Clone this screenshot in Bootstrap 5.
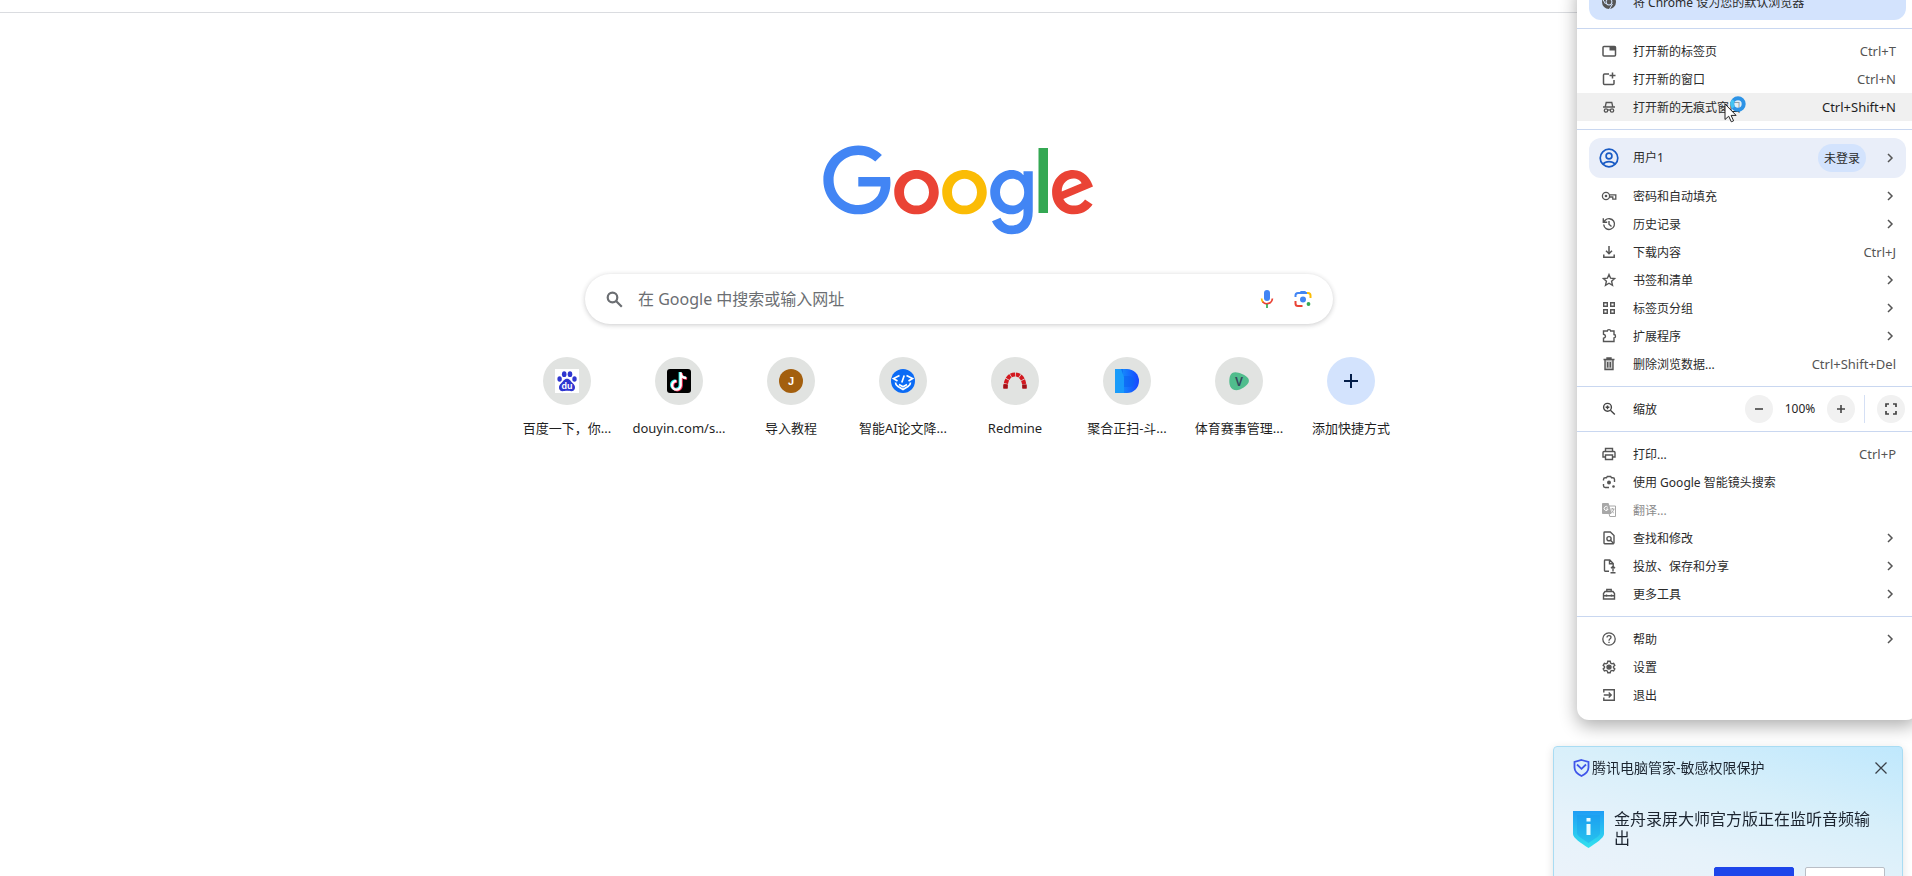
<!DOCTYPE html>
<html lang="zh-CN">
<head>
<meta charset="utf-8">
<meta name="viewport" content="width=device-width, initial-scale=1">
<title>新标签页</title>
<link href="https://cdn.jsdelivr.net/npm/bootstrap@5.3.0/dist/css/bootstrap.min.css" rel="stylesheet">
<style>
body{font-family:"Noto Sans","Noto Sans CJK SC",sans-serif;color:#1f1f1f;background:#fff;overflow:hidden}
/* the maximised window runs slightly past the right screen edge */
.shell{min-height:100vh;margin-right:-6px}
.toolbar-edge{height:13px;border-bottom:1px solid #dadce0}
.start-page{padding-top:132px}
.brand-logo{width:272px;height:92px}
.search-box{width:748px;max-width:90%;height:50px;border-radius:25px;box-shadow:0 1px 5px rgba(32,33,36,.24);padding:0 20px 0 21px;margin-top:37px}
.search-box input{font-size:16px;color:#444;margin-left:15px;outline:0}
.search-box input::placeholder{color:#6b6e72;opacity:1}
.search-box button,.tile,.menu-row,.round-btn,.close-btn{background:none;border:0;padding:0}
.tiles{margin-top:33px}
.tile{width:112px;color:#1f1f1f;font-size:13px;line-height:18px;text-decoration:none}
.tile-disc{width:48px;height:48px;border-radius:50%;background:#e1e3e1;margin-bottom:14px}
.tile-disc.add{background:#d3e3fd}
.app-menu{top:-20px;right:0;width:341px;border-radius:12px;background:#fff;box-shadow:0 6px 18px rgba(0,0,0,.32);padding-bottom:11px;font-size:12px;line-height:16px}
.app-menu hr{margin:8px 0;border-color:#c9d7f0;opacity:1}
.menu-row{width:100%;height:28px;padding:0 22px 0 24px;gap:16px;color:#2b2b2b;text-align:left}
.menu-row>span,.zoom-row>span{padding-top:1px}
.menu-row:disabled{color:#8b8b8b}
.menu-row.hovered{background:#f0f0f0}
.menu-row svg,.menu-soft svg{flex:none;color:#555}
.menu-row:disabled svg{color:#a8a8a8}
.menu-row .keys{color:#555;font-size:13px;padding-top:0}
.menu-row.hovered .keys{color:#1f1f1f}
.menu-soft{border:0;margin:0 12px;width:317px;height:40px;border-radius:12px;padding:0 10px;gap:14px;background:#e9eef9;font-size:12px;color:#2b2b2b;text-align:left}
.menu-soft.promo{background:#d3e3fd;padding-left:12px;gap:16px}
.menu-soft.promo span{padding-top:6px}
.menu-soft.promo svg{margin-top:4px}
.menu-soft.profile{margin-bottom:4px}
.menu-soft.profile .face{color:#1a5bc4}
.status-pill{background:#d3e3fd;border-radius:14px;height:28px;line-height:29px;width:48px;text-align:center;margin-right:4px}
.zoom-row{height:28px;padding:0 13px 0 24px;gap:16px}
.zoom-row svg{color:#444}
.round-btn{width:28px;height:28px;border-radius:50%;background:#f1f1f1}
.zoom-value{width:54px;text-align:center}
.zoom-split{width:1px;height:28px;background:#d5e0f5;margin:0 12px 0 9px}
.pointer{left:147px;top:2px}
.guard{top:calc(100% - 130px);right:9px;width:350px;padding:12px 15px 24px 19px;border:1px solid #a9dcf3;border-radius:4px;background:linear-gradient(195deg,#bfe8fd 0%,#d7effa 32%,#e6f2fa 60%,#eef3fa 100%);box-shadow:0 2px 10px rgba(0,0,0,.12);color:#1c2530}
.guard-title{font-size:14px;line-height:18px;gap:2px}
.guard-text{font-size:16px;line-height:19px;margin:0;font-weight:400}
.guard-body{margin-top:33px;gap:10px;padding-right:14px}
.guard-actions{margin:19px 2px 0 0;gap:11px}
.guard-actions button{width:80px;height:30px;border-radius:2px;border:1px solid #b9bec6;background:#fff}
.guard-actions button.primary{background:#1d45ea;border-color:#1d45ea}
</style>
</head>
<body>
<svg width="0" height="0" class="position-absolute" aria-hidden="true">
  <symbol id="chev" viewBox="0 0 12 12"><path d="M4 2l4 4-4 4" fill="none" stroke="currentColor" stroke-width="1.500"/></symbol>
</svg>
<div class="shell position-relative">
  <div class="toolbar-edge"></div>
  <main class="start-page d-flex flex-column align-items-center">
    <svg class="brand-logo" viewBox="0 0 272 92" role="img" aria-label="Google">
      <path fill="#EA4335" d="M115.75 47.18c0 12.77-9.99 22.18-22.25 22.18s-22.25-9.41-22.25-22.18C71.25 34.32 81.24 25 93.5 25s22.25 9.32 22.25 22.18zm-9.74 0c0-7.98-5.79-13.44-12.51-13.44S80.99 39.2 80.99 47.18c0 7.9 5.79 13.44 12.51 13.44s12.51-5.55 12.51-13.44z"/>
      <path fill="#FBBC05" d="M163.75 47.18c0 12.77-9.99 22.18-22.25 22.18s-22.25-9.41-22.25-22.18c0-12.85 9.99-22.18 22.25-22.18s22.25 9.32 22.25 22.18zm-9.74 0c0-7.98-5.79-13.44-12.51-13.44s-12.51 5.46-12.51 13.44c0 7.9 5.79 13.44 12.51 13.44s12.51-5.55 12.51-13.44z"/>
      <path fill="#4285F4" d="M209.75 26.34v39.82c0 16.38-9.66 23.07-21.08 23.07-10.75 0-17.22-7.19-19.66-13.07l8.48-3.53c1.51 3.61 5.21 7.87 11.17 7.87 7.31 0 11.84-4.51 11.84-13v-3.19h-.34c-2.18 2.69-6.38 5.04-11.68 5.04-11.09 0-21.25-9.66-21.25-22.09 0-12.52 10.16-22.26 21.25-22.26 5.29 0 9.49 2.35 11.68 4.96h.34v-3.61h9.25zm-8.56 20.92c0-7.81-5.21-13.52-11.84-13.52-6.72 0-12.35 5.71-12.35 13.52 0 7.73 5.63 13.36 12.35 13.36 6.63 0 11.84-5.63 11.84-13.36z"/>
      <path fill="#34A853" d="M225 3v65h-9.5V3h9.5z"/>
      <path fill="#EA4335" d="M262.02 54.48l7.56 5.04c-2.44 3.61-8.32 9.83-18.48 9.83-12.6 0-22.01-9.74-22.01-22.18 0-13.19 9.49-22.18 20.92-22.18 11.51 0 17.14 9.16 18.98 14.11l1.01 2.52-29.65 12.28c2.27 4.45 5.8 6.72 10.75 6.72 4.96 0 8.4-2.44 10.92-6.14zm-23.27-7.98l19.82-8.23c-1.09-2.77-4.37-4.7-8.23-4.7-4.95 0-11.84 4.37-11.59 12.93z"/>
      <path fill="#4285F4" d="M35.29 41.41V32H67c.31 1.64.47 3.58.47 5.68 0 7.06-1.93 15.79-8.15 22.01-6.05 6.3-13.78 9.66-24.02 9.66C16.32 69.35.36 53.89.36 34.91.36 15.93 16.32.47 35.3.47c10.5 0 17.98 4.12 23.6 9.49l-6.64 6.64c-4.03-3.78-9.49-6.72-16.97-6.72-13.86 0-24.7 11.17-24.7 25.03 0 13.86 10.84 25.03 24.7 25.03 8.99 0 14.11-3.61 17.39-6.89 2.66-2.66 4.41-6.46 5.1-11.65l-22.49.01z"/>
    </svg>

    <form class="search-box d-flex align-items-center bg-white" role="search" onsubmit="return false">
      <svg width="17" height="17" viewBox="0 0 17 17" fill="none" stroke="#6b6e72" stroke-width="2.200"><circle cx="6.500" cy="6.500" r="4.800"/><path d="M10 10l5.800 5.800"/></svg>
      <input type="text" class="flex-grow-1 border-0 bg-transparent p-0" aria-label="搜索" placeholder="在 Google 中搜索或输入网址">
      <button type="button" class="d-flex me-3" aria-label="语音搜索">
        <svg width="20" height="20" viewBox="0 0 20 20" fill="none"><rect x="7" y="1" width="6" height="11" rx="3" fill="#4285f4"/><path d="M4.600 9.500c0 1.500.6 2.900 1.600 3.800" stroke="#fbbc04" stroke-width="1.700"/><path d="M5.600 12.800a5.600 5.600 0 0 0 9.800-3.300" stroke="#ea4335" stroke-width="1.700"/><path d="M10 15v4" stroke="#34a853" stroke-width="1.700"/></svg>
      </button>
      <button type="button" class="d-flex" aria-label="图片搜索">
        <svg width="20" height="20" viewBox="0 0 20 20" fill="none" stroke-width="2"><path d="M2.500 8V6.500a2.500 2.500 0 0 1 2.500-2.500h10" stroke="#4285f4"/><path d="M7 4V3.200Q7 2 8.200 2h3.600Q13 2 13 3.200V4z" fill="#4285f4"/><path d="M14 4h1a2.500 2.500 0 0 1 2.500 2.500V9" stroke="#fbbc04"/><path d="M2.500 12v2.500a2.500 2.500 0 0 0 2.500 2.500h4.500" stroke="#ea4335"/><circle cx="10" cy="10.500" r="3" fill="#4285f4"/><circle cx="15.500" cy="15" r="1.900" fill="#34a853"/></svg>
      </button>
    </form>

    <nav class="tiles d-flex" aria-label="快捷方式">
      <a href="#" class="tile d-flex flex-column align-items-center"><span class="tile-disc d-flex align-items-center justify-content-center">
        <svg width="24" height="24" viewBox="0 0 24 24"><rect width="24" height="24" fill="#fff"/><g fill="#2f36d0"><ellipse cx="4.600" cy="10" rx="2.200" ry="2.700"/><ellipse cx="9.200" cy="5.200" rx="2.300" ry="2.900"/><ellipse cx="15" cy="5.200" rx="2.300" ry="2.900"/><ellipse cx="19.500" cy="10" rx="2.200" ry="2.700"/><path d="M12 9.800c3 0 3.600 2.600 5.800 4.400 3.700 3 2.400 8-1.400 8-1.700 0-2.600-.4-4.400-.4s-2.700.4-4.400.4c-3.800 0-5.100-5-1.400-8C8.400 12.400 9 9.800 12 9.800z"/></g><text x="12" y="20" text-anchor="middle" font-family="Liberation Sans" font-weight="700" font-size="9" fill="#fff">du</text></svg>
      </span><span>百度一下，你...</span></a>
      <a href="#" class="tile d-flex flex-column align-items-center"><span class="tile-disc d-flex align-items-center justify-content-center">
        <svg width="24" height="24" viewBox="0 0 24 24" fill="none" stroke-width="2.600"><rect width="24" height="24" rx="3" fill="#000"/><path d="M12.900 3v12.800a4.300 4.300 0 1 1-4.300-4.300M13 4.200c.6 2.900 2.700 4.200 5.600 4.300" stroke="#25f4ee"/><path d="M14.500 4v12.800a4.300 4.300 0 1 1-4.300-4.300M14.500 5.200c.6 2.900 2.700 4.200 5.600 4.300" stroke="#fe2c55"/><path d="M13.700 3.300v13a4.300 4.300 0 1 1-4.300-4.300M13.700 4.700c.6 2.900 2.700 4.200 5.600 4.300" stroke="#fff" stroke-width="2.300"/></svg>
      </span><span>douyin.com/s...</span></a>
      <a href="#" class="tile d-flex flex-column align-items-center"><span class="tile-disc d-flex align-items-center justify-content-center">
        <svg width="24" height="24" viewBox="0 0 24 24"><circle cx="12" cy="12" r="12" fill="#a35f0e"/><text x="12" y="16" text-anchor="middle" font-family="Liberation Sans" font-weight="700" font-size="11" fill="#fff">J</text></svg>
      </span><span>导入教程</span></a>
      <a href="#" class="tile d-flex flex-column align-items-center"><span class="tile-disc d-flex align-items-center justify-content-center">
        <svg width="24" height="24" viewBox="0 0 24 24" fill="none" stroke="#fff" stroke-width="1.700"><circle cx="12" cy="12" r="12" fill="#0b6bf5" stroke="none"/><path d="M8.500 6.500L2.500 9.500l4 2.500M15.500 6.500l6 3-4 2.500M13.200 6.500l-2.400 7M4.500 13.500c0 2 .8 3 2.500 4l5 3 5-3c1.700-1 2.500-2 2.500-4M8 15.500l4 2.200 4-2.200"/></svg>
      </span><span>智能AI论文降...</span></a>
      <a href="#" class="tile d-flex flex-column align-items-center"><span class="tile-disc d-flex align-items-center justify-content-center">
        <svg width="24" height="24" viewBox="0 0 24 24" fill="none" stroke-width="4.200"><path d="M2.500 19.500C2.500 10 6.500 5.500 12 5.500s9.500 4.500 9.500 14" stroke="#d3181f" stroke-dasharray="4.200 .7"/><path d="M2.500 19.500v-4M21.500 19.500v-4" stroke="#a01218"/></svg>
      </span><span>Redmine</span></a>
      <a href="#" class="tile d-flex flex-column align-items-center"><span class="tile-disc d-flex align-items-center justify-content-center">
        <svg width="24" height="24" viewBox="0 0 24 24"><defs><linearGradient id="dg"><stop offset="0" stop-color="#14a5fb"/><stop offset="1" stop-color="#1746ff"/></linearGradient></defs><path d="M0 0h12a12 12 0 0 1 0 24H0z" fill="url(#dg)"/><path d="M8 7h6a5.500 5.500 0 0 1 0 11H9v6H0V0h8z" fill="#0b62f0" opacity=".55"/><path d="M0 0h6l3 8v16H0z" fill="#1ba4fb" opacity=".8"/></svg>
      </span><span>聚合正扫-斗...</span></a>
      <a href="#" class="tile d-flex flex-column align-items-center"><span class="tile-disc d-flex align-items-center justify-content-center">
        <svg width="24" height="24" viewBox="0 0 24 24"><path d="M3 7C5 2 10 3 15 5c5 2 8 5 6.500 8.500C20 17 13 22 7.500 21 2 20 1.500 12 3 7z" fill="#50bd8d"/><text x="12" y="17" text-anchor="middle" font-family="Liberation Sans" font-weight="700" font-size="12" fill="#34495e">V</text></svg>
      </span><span>体育赛事管理...</span></a>
      <button type="button" class="tile d-flex flex-column align-items-center"><span class="tile-disc add d-flex align-items-center justify-content-center">
        <svg width="16" height="16" viewBox="0 0 16 16" stroke="#041e49" stroke-width="2"><path d="M8 1v14M1 8h14"/></svg>
      </span><span>添加快捷方式</span></button>
    </nav>
  </main>

  <aside class="app-menu position-absolute" role="menu">
    <button type="button" class="menu-soft promo d-flex align-items-center">
      <svg width="16" height="16" viewBox="0 0 16 16" fill="none" stroke="currentColor"><circle cx="8" cy="8" r="5.200" stroke-width="3.600"/><circle cx="8" cy="8" r="2.400" fill="currentColor" stroke="none"/><path d="M8 4h6.500M4.500 10L1.500 4.800M11.500 10l-3.300 5.500" stroke="#d3e3fd"/></svg>
      <span>将 Chrome 设为您的默认浏览器</span>
    </button>
    <hr>
    <button type="button" class="menu-row d-flex align-items-center">
      <svg width="16" height="16" viewBox="0 0 16 16" fill="none" stroke="currentColor" stroke-width="1.500"><rect x="2" y="3.500" width="12.500" height="9.500" rx="1"/><path d="M8.500 3.500h6v4h-6z" fill="currentColor" stroke="none"/></svg>
      <span class="flex-grow-1">打开新的标签页</span><span class="keys">Ctrl+T</span></button>
    <button type="button" class="menu-row d-flex align-items-center">
      <svg width="16" height="16" viewBox="0 0 16 16" fill="none" stroke="currentColor" stroke-width="1.500"><path d="M8 3H3.500Q2.500 3 2.500 4v8.500q0 1 1 1H12q1 0 1-1V9M11.500 1.500v6M8.500 4.500h6"/></svg>
      <span class="flex-grow-1">打开新的窗口</span><span class="keys">Ctrl+N</span></button>
    <button type="button" class="menu-row hovered d-flex align-items-center position-relative">
      <svg width="16" height="16" viewBox="0 0 16 16" fill="none" stroke="currentColor" stroke-width="1.300"><path d="M2 8h12M4.200 8l1-4.500h5.600l1 4.500"/><circle cx="5" cy="11.500" r="1.700"/><circle cx="11" cy="11.500" r="1.700"/><path d="M6.700 11.200q1.300-.6 2.600 0"/></svg>
      <span class="flex-grow-1">打开新的无痕式窗口</span><span class="keys">Ctrl+Shift+N</span>
      <svg class="pointer position-absolute" width="24" height="28" viewBox="0 0 24 28" aria-hidden="true"><circle cx="14" cy="9" r="5.700" fill="#d9effc" fill-opacity=".6" stroke="#2d93e6" stroke-width="4"/><path d="M9.500 5.300A5.700 5.700 0 0 0 9.500 12.500" stroke="#45c4f2" stroke-width="3.500" fill="none"/><path d="M1 9v15.500l3.700-3.300 2.600 5.600 2.300-1-2.500-5.400h5z" fill="#fff" stroke="#222"/></svg>
    </button>
    <hr>
    <button type="button" class="menu-soft profile d-flex align-items-center">
      <svg class="face" width="20" height="20" viewBox="0 0 20 20" fill="none" stroke="currentColor" stroke-width="1.700"><circle cx="10" cy="10" r="8.800"/><circle cx="10" cy="8" r="2.900"/><path d="M4 16.200c2.800-3.400 9.200-3.400 12 0"/></svg>
      <span class="flex-grow-1">用户1</span><span class="status-pill">未登录</span><svg width="12" height="12"><use href="#chev"/></svg>
    </button>
    <button type="button" class="menu-row d-flex align-items-center">
      <svg width="16" height="16" viewBox="0 0 16 16" fill="none" stroke="currentColor" stroke-width="1.300"><circle cx="5" cy="8" r="3.600"/><circle cx="5" cy="8" r="1.300" fill="currentColor" stroke="none"/><path d="M8.500 6.800h6.300v4.400h-3V9H8.500"/></svg>
      <span class="flex-grow-1">密码和自动填充</span><svg width="12" height="12"><use href="#chev"/></svg></button>
    <button type="button" class="menu-row d-flex align-items-center">
      <svg width="16" height="16" viewBox="0 0 16 16" fill="none" stroke="currentColor" stroke-width="1.400"><path d="M2.700 8.500a5.400 5.400 0 1 0 1.500-4.200L2.500 6M2.300 2.300V6.200h3.900M8 5v3.300l2.500 2.200"/></svg>
      <span class="flex-grow-1">历史记录</span><svg width="12" height="12"><use href="#chev"/></svg></button>
    <button type="button" class="menu-row d-flex align-items-center">
      <svg width="16" height="16" viewBox="0 0 16 16" fill="none" stroke="currentColor" stroke-width="1.500"><path d="M8 2v7.500M5 6.800l3 3 3-3M2.800 10.500v2.700h10.400v-2.700"/></svg>
      <span class="flex-grow-1">下载内容</span><span class="keys">Ctrl+J</span></button>
    <button type="button" class="menu-row d-flex align-items-center">
      <svg width="16" height="16" viewBox="0 0 16 16" fill="none" stroke="currentColor" stroke-width="1.400"><path d="M8 2.500l1.600 3.700 4 .4-3 2.700.9 4L8 11.200l-3.500 2.100.9-4-3-2.700 4-.4z"/></svg>
      <span class="flex-grow-1">书签和清单</span><svg width="12" height="12"><use href="#chev"/></svg></button>
    <button type="button" class="menu-row d-flex align-items-center">
      <svg width="16" height="16" viewBox="0 0 16 16" fill="none" stroke="currentColor" stroke-width="1.400"><path d="M2.700 2.700h3.600v3.600H2.700zM9.700 2.700h3.600v3.600H9.700zM2.700 9.700h3.600v3.600H2.700zM9.700 9.700h3.600v3.600H9.700z"/></svg>
      <span class="flex-grow-1">标签页分组</span><svg width="12" height="12"><use href="#chev"/></svg></button>
    <button type="button" class="menu-row d-flex align-items-center">
      <svg width="16" height="16" viewBox="0 0 16 16" fill="none" stroke="currentColor" stroke-width="1.400"><path d="M2.500 3h3.800a1.700 1.400 0 0 1 3.400 0H13v3.500a1.500 1.700 0 0 1 0 3.400v3.600H2.500v-3.300q2-.4 2-2t-2-2z"/></svg>
      <span class="flex-grow-1">扩展程序</span><svg width="12" height="12"><use href="#chev"/></svg></button>
    <button type="button" class="menu-row d-flex align-items-center">
      <svg width="16" height="16" viewBox="0 0 16 16" fill="none" stroke="currentColor" stroke-width="1.400"><path d="M4 3.500v10h8v-10" fill="#ccc"/><path d="M2.500 3.500h11M6 3V2h4v1M6.700 6v5.500M9.300 6v5.500"/></svg>
      <span class="flex-grow-1">删除浏览数据...</span><span class="keys">Ctrl+Shift+Del</span></button>
    <hr>
    <div class="zoom-row d-flex align-items-center">
      <svg width="16" height="16" viewBox="0 0 16 16" fill="none" stroke="currentColor" stroke-width="1.400"><circle cx="6.500" cy="6.300" r="3.900"/><path d="M9.400 9.200l4.400 4.400M4.600 6.300h3.800M6.500 4.400v3.800"/></svg>
      <span class="flex-grow-1">缩放</span>
      <div class="d-flex align-items-center">
        <button type="button" class="round-btn d-flex align-items-center justify-content-center" aria-label="缩小"><svg width="10" height="10" viewBox="0 0 10 10" stroke="currentColor" stroke-width="1.600"><path d="M1 5h8"/></svg></button>
        <span class="zoom-value">100%</span>
        <button type="button" class="round-btn d-flex align-items-center justify-content-center" aria-label="放大"><svg width="10" height="10" viewBox="0 0 10 10" stroke="currentColor" stroke-width="1.600"><path d="M1 5h8M5 1v8"/></svg></button>
        <span class="zoom-split"></span>
        <button type="button" class="round-btn d-flex align-items-center justify-content-center" aria-label="全屏"><svg width="14" height="14" viewBox="0 0 14 14" fill="none" stroke="currentColor" stroke-width="1.700"><path d="M2 5V2h3M9 2h3v3M12 9v3H9M5 12H2V9"/></svg></button>
      </div>
    </div>
    <hr>
    <button type="button" class="menu-row d-flex align-items-center">
      <svg width="16" height="16" viewBox="0 0 16 16" fill="none" stroke="currentColor" stroke-width="1.400"><path d="M4.500 5.500v-3h7v3M4.500 11H2V6.500q0-1 1-1h10q1 0 1 1V11h-2.500M4.500 9h7v4.500h-7z"/></svg>
      <span class="flex-grow-1">打印...</span><span class="keys">Ctrl+P</span></button>
    <button type="button" class="menu-row d-flex align-items-center">
      <svg width="16" height="16" viewBox="0 0 16 16" fill="none" stroke="currentColor" stroke-width="1.400"><path d="M2.500 6.500V5.500q0-1.700 1.700-1.700H5.500L6.300 2.500h3.400l.8 1.300h1.300q1.700 0 1.700 1.700V8M2.500 10v1.800q0 1.700 1.700 1.700H8"/><circle cx="8" cy="8.400" r="2" fill="currentColor" stroke="none"/><circle cx="12.500" cy="12.500" r="1.300" fill="currentColor" stroke="none"/></svg>
      <span class="flex-grow-1">使用 Google 智能镜头搜索</span></button>
    <button type="button" class="menu-row d-flex align-items-center" disabled>
      <svg width="16" height="16" viewBox="0 0 16 16" fill="none" stroke="currentColor"><path d="M1.500 1.500h5.800l2.700 10H1.500z" fill="currentColor"/><path d="M7.800 4h6.700v10.500H8.800L8 11.500M9.500 7h4M11.500 6v1M12.800 7q-.5 2.500-2.500 4M10.300 8.500q1 1.500 2.500 2.500"/><path d="M6.800 5.300a2 2 0 1 0 .3 1.700H5.200" stroke="#fff"/></svg>
      <span class="flex-grow-1">翻译...</span></button>
    <button type="button" class="menu-row d-flex align-items-center">
      <svg width="16" height="16" viewBox="0 0 16 16" fill="none" stroke="currentColor" stroke-width="1.400"><path d="M12.800 13.800H3.700q-.7 0-.7-.7V2.700Q3 2 3.700 2h5.600l3.700 3.500v8"/><circle cx="8" cy="8.700" r="2.100"/><path d="M9.500 10.300l3.200 3.200"/></svg>
      <span class="flex-grow-1">查找和修改</span><svg width="12" height="12"><use href="#chev"/></svg></button>
    <button type="button" class="menu-row d-flex align-items-center">
      <svg width="16" height="16" viewBox="0 0 16 16" fill="none" stroke="currentColor" stroke-width="1.400"><path d="M8 13.300H4.200q-.7 0-.7-.7V2.700Q3.500 2 4.200 2h4.600l3.400 3.500V8M8.500 2v3.800h3.700M12 8.500v5M10 10.300l2-2 2 2M9.500 14.700h5"/></svg>
      <span class="flex-grow-1">投放、保存和分享</span><svg width="12" height="12"><use href="#chev"/></svg></button>
    <button type="button" class="menu-row d-flex align-items-center">
      <svg width="16" height="16" viewBox="0 0 16 16" fill="none" stroke="currentColor" stroke-width="1.400"><path d="M2.500 13V7.500l1.500-2h8l1.500 2V13zM5.800 5.500v-2h4.400v2M2.500 9.700h11M5.500 8.500v2.300M10.500 8.500v2.300"/></svg>
      <span class="flex-grow-1">更多工具</span><svg width="12" height="12"><use href="#chev"/></svg></button>
    <hr>
    <button type="button" class="menu-row d-flex align-items-center">
      <svg width="16" height="16" viewBox="0 0 16 16" fill="none" stroke="currentColor" stroke-width="1.300"><circle cx="8" cy="8" r="6.200"/><path d="M6 6.500Q6 4.600 8 4.600t2 1.700Q10 7.300 8.900 8 8 8.600 8 9.700M8 10.700V12"/></svg>
      <span class="flex-grow-1">帮助</span><svg width="12" height="12"><use href="#chev"/></svg></button>
    <button type="button" class="menu-row d-flex align-items-center">
      <svg width="16" height="16" viewBox="0 0 16 16" fill="none" stroke="currentColor" stroke-width="1.400"><path d="M6.800 2.300h2.400l.4 1.700 1.300.8 1.700-.5 1.200 2.100L12.500 7.500v1.200l1.300 1.200-1.200 2-1.700-.5-1.300.8-.4 1.600H6.800l-.4-1.600-1.300-.8-1.700.5-1.200-2L3.500 8.700V7.500L2.200 6.400l1.200-2.100 1.700.5L6.400 4z"/><circle cx="8" cy="8.100" r="2" fill="currentColor"/></svg>
      <span class="flex-grow-1">设置</span></button>
    <button type="button" class="menu-row d-flex align-items-center">
      <svg width="16" height="16" viewBox="0 0 16 16" fill="none" stroke="currentColor" stroke-width="1.400"><path d="M2.800 5.500V2.700h10.500v10.600H2.800v-2.800M2.800 8h7M7.700 5.500L10.200 8l-2.500 2.500"/></svg>
      <span class="flex-grow-1">退出</span></button>
  </aside>
</div>

<section class="guard position-fixed" role="alertdialog" aria-labelledby="guardTitle">
  <div class="guard-title d-flex align-items-center">
    <svg width="17" height="18" viewBox="0 0 17 18" fill="none" stroke="#3f55ea" stroke-width="1.800"><path d="M8.500 1l7 2v5.500c0 4-3 6.500-7 8.500-4-2-7-4.500-7-8.500V3z"/><path d="M4 5.500l4.500 4.300L13 5.500"/></svg>
    <span id="guardTitle" class="flex-grow-1">腾讯电脑管家-敏感权限保护</span>
    <button type="button" class="close-btn d-flex" aria-label="关闭"><svg width="12" height="12" viewBox="0 0 12 12" stroke="#3a4048" stroke-width="1.300"><path d="M.5.500l11 11M11.500.500l-11 11"/></svg></button>
  </div>
  <div class="guard-body d-flex">
    <svg class="flex-shrink-0" width="31" height="38" viewBox="0 0 31 38"><defs><linearGradient id="sg" x1="0" y1="0" x2="0" y2="1"><stop offset="0" stop-color="#1f9df5"/><stop offset="1" stop-color="#33e2ee"/></linearGradient></defs><path d="M0 1h31v23c0 4-8 9-15.500 14C8 33 0 28 0 24z" fill="url(#sg)"/><path d="M4 5h23v18c0 3-6 6-11.500 10C10 29 4 26 4 23z" fill="#1497ea" opacity=".35"/><path d="M13.500 8h4v3.500h-4zM13.500 14h4v11h-4z" fill="#e8fbff"/></svg>
    <p class="guard-text">金舟录屏大师官方版正在监听音频输出</p>
  </div>
  <div class="guard-actions d-flex justify-content-end">
    <button type="button" class="primary" aria-label="允许"></button>
    <button type="button" aria-label="阻止"></button>
  </div>
</section>
<script src="https://cdn.jsdelivr.net/npm/bootstrap@5.3.0/dist/js/bootstrap.bundle.min.js"></script>
</body>
</html>
